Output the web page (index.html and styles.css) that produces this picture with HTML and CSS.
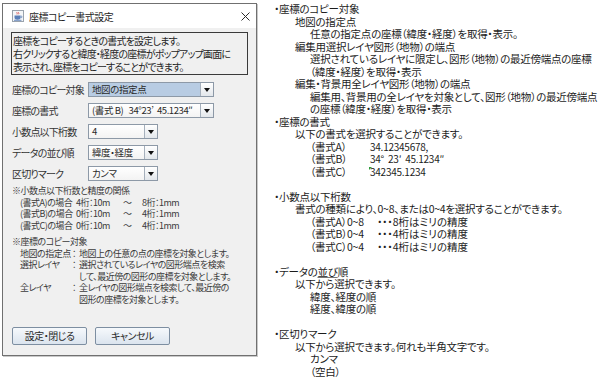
FILE: index.html
```html
<!DOCTYPE html>
<html lang="ja">
<head>
<meta charset="utf-8">
<title>座標コピー書式設定</title>
<link rel="stylesheet" href="styles.css">
</head>
<body>
<div class="page">
  <div class="dialog">
    <div class="titlebar">
      <svg class="appicon" viewBox="0 0 12 12" width="12" height="12">
        <rect x="0.5" y="0.5" width="11" height="11" fill="#f4f6f8" stroke="#9aa3ad"/>
        <path d="M5 2.2c-.8.8.8 1.2 0 2.2M6.6 2c-.8.8.8 1.2 0 2.2" stroke="#d2383a" stroke-width="0.8" fill="none"/>
        <path d="M2.5 5.5h6v2.2c0 1.3-1.2 2-3 2s-3-.7-3-2z" fill="#5b7fb8"/>
        <path d="M8.5 6.2h1c.8 0 .8 1.4 0 1.4h-1" stroke="#5b7fb8" stroke-width="0.8" fill="none"/>
        <rect x="2" y="9.8" width="7.5" height="0.9" fill="#5b7fb8"/>
      </svg>
      <span class="title">座標コピー書式設定</span>
      <svg class="close" viewBox="0 0 9 9" width="9" height="9">
        <path d="M0.5 0.5L8.5 8.5M8.5 0.5L0.5 8.5" stroke="#2b2b2b" stroke-width="1"/>
      </svg>
    </div>
    <div class="dbody">
      <div class="info">座標をコピーするときの書式を設定します。<br>右クリックすると緯度・経度の座標がポップアップ画面に<br>表示され、座標をコピーすることができます。</div>
      <div class="form">
        <div class="row">
          <span class="lbl">座標のコピー対象</span>
          <div class="combo wide selected"><span class="val">地図の指定点</span><span class="arrow"></span></div>
        </div>
        <div class="row">
          <span class="lbl">座標の書式</span>
          <div class="combo wide"><span class="val">(書式 B)&nbsp;&nbsp;&nbsp;34°23’&nbsp;&nbsp;45.1234″</span><span class="arrow"></span></div>
        </div>
        <div class="row">
          <span class="lbl">小数点以下桁数</span>
          <div class="combo narrow"><span class="val">4</span><span class="arrow"></span></div>
        </div>
        <div class="row">
          <span class="lbl">データの並び順</span>
          <div class="combo narrow"><span class="val">緯度・経度</span><span class="arrow"></span></div>
        </div>
        <div class="row">
          <span class="lbl">区切りマーク</span>
          <div class="combo narrow"><span class="val">カンマ</span><span class="arrow"></span></div>
        </div>
      </div>
      <div class="note">
        <div class="nhead">※小数点以下桁数と精度の関係</div>
        <div class="prec"><span class="pk">(書式A)の場合</span><span class="pa">4桁：10m</span><span class="pt">～</span><span class="pb">8桁：1mm</span></div>
        <div class="prec"><span class="pk">(書式B)の場合</span><span class="pa">0桁：10m</span><span class="pt">～</span><span class="pb">4桁：1mm</span></div>
        <div class="prec"><span class="pk">(書式C)の場合</span><span class="pa">0桁：10m</span><span class="pt">～</span><span class="pb">4桁：1mm</span></div>
      </div>
      <div class="note second">
        <div class="nhead">※座標のコピー対象</div>
        <div class="tgt">
          <span class="tk">地図の指定点</span><span class="tc">：</span><span class="tv">地図上の任意の点の座標を対象とします。</span>
          <span class="tk">選択レイヤ</span><span class="tc">：</span><span class="tv">選択されているレイヤの図形端点を検索<br>して、最近傍の図形の座標を対象とします。</span>
          <span class="tk">全レイヤ</span><span class="tc">：</span><span class="tv">全レイヤの図形端点を検索して、最近傍の<br>図形の座標を対象とします。</span>
        </div>
      </div>
      <div class="buttons">
        <button class="btn">設定・閉じる</button>
        <button class="btn">キャンセル</button>
      </div>
    </div>
  </div>

  <div class="doc">
    <div class="l0">・座標のコピー対象</div>
    <div class="l1">地図の指定点</div>
    <div class="l2">任意の指定点の座標（緯度・経度）を取得・表示。</div>
    <div class="l1">編集用選択レイヤ図形（地物）の端点</div>
    <div class="l2">選択されているレイヤに限定し、図形（地物）の最近傍端点の座標</div>
    <div class="l2">（緯度・経度）を取得・表示</div>
    <div class="l1">編集・背景用全レイヤ図形（地物）の端点</div>
    <div class="l2">編集用、背景用の全レイヤを対象として、図形（地物）の最近傍端点</div>
    <div class="l2">の座標（緯度・経度）を取得・表示</div>
    <div class="l0">・座標の書式</div>
    <div class="l1">以下の書式を選択することができます。</div>
    <div class="l2 tab"><span class="fk">（書式A）</span><span class="fv">34.12345678,</span></div>
    <div class="l2 tab"><span class="fk">（書式B）</span><span class="fv">34°&nbsp;&nbsp;23′&nbsp;&nbsp;45.1234″</span></div>
    <div class="l2 tab"><span class="fk">（書式C）</span><span class="fv flag">342345.1234</span></div>
    <div class="blank"></div>
    <div class="l0">・小数点以下桁数</div>
    <div class="l1">書式の種類により、0~8、または0~4を選択することができます。</div>
    <div class="l2 tab"><span class="dk">（書式A）</span><span class="dr">0~8</span><span class="dn">・・・8桁はミリの精度</span></div>
    <div class="l2 tab"><span class="dk">（書式B）</span><span class="dr">0~4</span><span class="dn">・・・4桁はミリの精度</span></div>
    <div class="l2 tab"><span class="dk">（書式C）</span><span class="dr">0~4</span><span class="dn">・・・4桁はミリの精度</span></div>
    <div class="blank"></div>
    <div class="l0">・データの<span class="ul">並び</span>順</div>
    <div class="l1">以下から選択できます。</div>
    <div class="l2">緯度、経度の順</div>
    <div class="l2">経度、緯度の順</div>
    <div class="blank"></div>
    <div class="l0">・区切りマーク</div>
    <div class="l1">以下から選択できます。何れも半角文字です。</div>
    <div class="l2">カンマ</div>
    <div class="l2">（空白）</div>
  </div>
</div>
</body>
</html>
```

FILE: styles.css
```css
html, body {
  margin: 0;
  padding: 0;
}

body {
  width: 600px;
  height: 380px;
  overflow: hidden;
  background: #ffffff;
  font-family: "Noto Sans CJK JP", "Noto Sans", sans-serif;
  font-feature-settings: "palt";
  color: #222222;
}

.page {
  display: flex;
  align-items: flex-start;
  padding: 3px 0 0 2px;
}

/* ---------- dialog ---------- */
.dialog {
  width: 255px;
  height: 353px;
  box-sizing: border-box;
  border: 1px solid #707070;
  box-shadow: 1px 1px 0 #c9c9c9;
  background: #f0f0f0;
  display: flex;
  flex-direction: column;
}

.titlebar {
  height: 24px;
  flex: none;
  background: #ffffff;
  display: flex;
  align-items: center;
  padding: 0 6px 0 9px;
}

.appicon {
  flex: none;
  margin-right: 5px;
}

.title {
  flex: 1;
  font-size: 10px;
  letter-spacing: -0.5px;
  color: #1e1e1e;
}

.close {
  flex: none;
}

.dbody {
  display: flex;
  flex-direction: column;
  padding: 4px 8px 0 8px;
}

.info {
  height: 43px;
  box-sizing: border-box;
  border: 1px solid #3a3a3a;
  padding: 1px 1px;
  font-size: 10px;
  letter-spacing: -0.8px;
  line-height: 13px;
  color: #262626;
  white-space: nowrap;
}

.form {
  display: flex;
  flex-direction: column;
  gap: 6px;
  margin-top: 7px;
}

.row {
  display: flex;
  align-items: center;
  height: 15px;
}

.lbl {
  width: 77px;
  padding-left: 1px;
  box-sizing: border-box;
  font-size: 10px;
  letter-spacing: -0.8px;
  color: #333333;
  white-space: nowrap;
}

.combo {
  height: 15px;
  box-sizing: border-box;
  border: 1px solid #8d99a7;
  background: linear-gradient(#ffffff, #f3f3f3);
  display: flex;
}

.combo.wide {
  width: 126px;
}

.combo.narrow {
  width: 70px;
}

.combo .val {
  flex: 1;
  font-size: 9.5px;
  letter-spacing: -0.4px;
  line-height: 13px;
  padding-left: 3px;
  color: #2a2a2a;
  white-space: nowrap;
  overflow: hidden;
}

.combo.selected .val {
  background: #b8cce3;
}

.combo .arrow {
  width: 12px;
  flex: none;
  border-left: 1px solid #a6b0bc;
  background: linear-gradient(#ffffff, #e3e7eb);
  display: flex;
  align-items: center;
  justify-content: center;
}

.combo .arrow::after {
  content: "";
  width: 0;
  height: 0;
  border-left: 3.5px solid transparent;
  border-right: 3.5px solid transparent;
  border-top: 4px solid #111111;
}

.note {
  margin-top: 4px;
  padding-left: 1px;
  font-size: 9px;
  letter-spacing: -0.5px;
  line-height: 11.5px;
  color: #3a3a3a;
}

.note.second {
  margin-top: 5px;
}

.prec {
  display: flex;
  padding-left: 8px;
  white-space: nowrap;
}

.pk {
  width: 56px;
}

.pa {
  width: 47px;
}

.pt {
  width: 19px;
}

.tgt {
  display: grid;
  grid-template-columns: 52px 7px auto;
  padding-left: 8px;
  white-space: nowrap;
}

.buttons {
  display: flex;
  gap: 8px;
  margin-top: 22px;
  padding-left: 1px;
}

.btn {
  width: 75px;
  height: 18px;
  box-sizing: border-box;
  border: 1px solid #7d8ea1;
  border-radius: 2px;
  background: linear-gradient(#f6f9fc, #dbe4ee);
  font-family: inherit;
  font-feature-settings: "palt";
  font-size: 10px;
  letter-spacing: -0.5px;
  color: #2a2a2a;
  padding: 0;
  line-height: 16px;
}

/* ---------- documentation text ---------- */
.doc {
  margin-left: 17px;
  font-size: 10.5px;
  letter-spacing: -0.25px;
  line-height: 12.5px;
  color: #1c1c1c;
  white-space: nowrap;
}

.doc > div {
  height: 12.5px;
}

.l1 {
  padding-left: 21px;
}

.l2 {
  padding-left: 36px;
}

.tab {
  display: flex;
}

.fk {
  width: 60px;
}

.dk {
  width: 37px;
}

.dr {
  width: 30px;
}

.dn {
  letter-spacing: 0;
}

.fv {
  font-size: 10px;
}

.flag {
  position: relative;
}

.flag::before {
  content: "";
  position: absolute;
  left: -1px;
  top: 1px;
  border-top: 3px solid #2e9b3a;
  border-right: 3px solid transparent;
}

.ul {
  text-decoration: underline;
  text-decoration-color: #777777;
}
```
